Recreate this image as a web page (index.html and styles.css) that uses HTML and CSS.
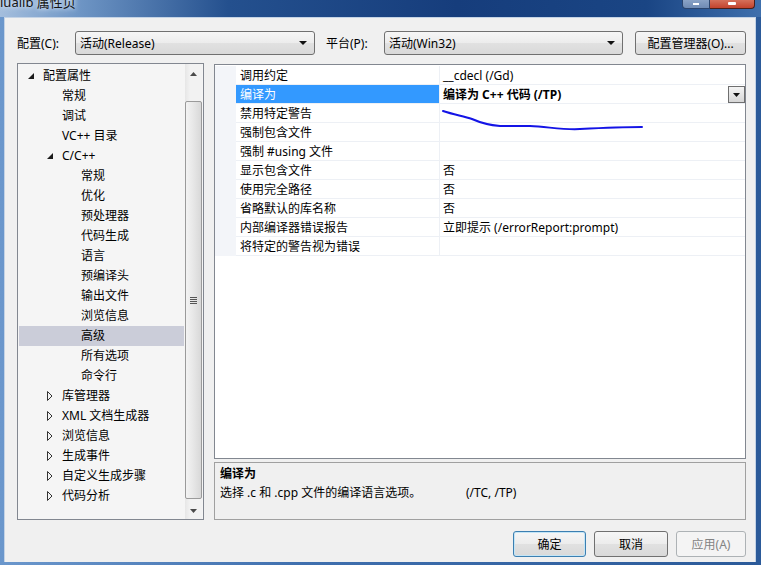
FILE: index.html
```html
<!DOCTYPE html>
<html lang="zh-CN">
  <head>
    <meta charset="utf-8">
    <link rel="stylesheet" href="styles.css">
    <title>lualib 属性页</title>
  </head>

  <body>
    <div class="window">
      <div class="titlebar">
        <span class="title">lualib 属性页</span>
        <div class="caption">
          <span class="capMin"><i></i></span>
          <span class="capClose"><i></i></span>
        </div>
      </div>

      <div class="client">
        <!-- config / platform row -->
        <div class="topRow">
          <span class="lbl">配置(C):</span>
          <div class="combo comboConf">
            <span>活动(Release)</span>
            <span class="comboArrow"></span>
          </div>
          <span class="lbl lblPlat">平台(P):</span>
          <div class="combo comboPlat">
            <span>活动(Win32)</span>
            <span class="comboArrow"></span>
          </div>
          <div class="btn btnManager">配置管理器(O)...</div>
        </div>

        <div class="mainRow">
          <!-- property tree -->
          <div class="tree">
            <div class="treeList">
              <div class="tRow lvl1"><span class="tw"><svg width="7" height="7" viewBox="0 0 7 7"><polygon points="6,0 6,6 0,6" fill="#1b1b1b"/></svg></span>配置属性</div>
              <div class="tRow lvl2"><span class="tw"></span>常规</div>
              <div class="tRow lvl2"><span class="tw"></span>调试</div>
              <div class="tRow lvl2"><span class="tw"></span>VC++ 目录</div>
              <div class="tRow lvl2"><span class="tw"><svg width="7" height="7" viewBox="0 0 7 7"><polygon points="6,0 6,6 0,6" fill="#1b1b1b"/></svg></span>C/C++</div>
              <div class="tRow lvl3"><span class="tw"></span>常规</div>
              <div class="tRow lvl3"><span class="tw"></span>优化</div>
              <div class="tRow lvl3"><span class="tw"></span>预处理器</div>
              <div class="tRow lvl3"><span class="tw"></span>代码生成</div>
              <div class="tRow lvl3"><span class="tw"></span>语言</div>
              <div class="tRow lvl3"><span class="tw"></span>预编译头</div>
              <div class="tRow lvl3"><span class="tw"></span>输出文件</div>
              <div class="tRow lvl3"><span class="tw"></span>浏览信息</div>
              <div class="tRow lvl3 tSel"><span class="tw"></span>高级</div>
              <div class="tRow lvl3"><span class="tw"></span>所有选项</div>
              <div class="tRow lvl3"><span class="tw"></span>命令行</div>
              <div class="tRow lvl2"><span class="tw"><svg width="6" height="10" viewBox="0 0 6 10"><polygon points="0.5,0.5 5,5 0.5,9.5" fill="none" stroke="#333" stroke-width="1"/></svg></span>库管理器</div>
              <div class="tRow lvl2"><span class="tw"><svg width="6" height="10" viewBox="0 0 6 10"><polygon points="0.5,0.5 5,5 0.5,9.5" fill="none" stroke="#333" stroke-width="1"/></svg></span>XML 文档生成器</div>
              <div class="tRow lvl2"><span class="tw"><svg width="6" height="10" viewBox="0 0 6 10"><polygon points="0.5,0.5 5,5 0.5,9.5" fill="none" stroke="#333" stroke-width="1"/></svg></span>浏览信息</div>
              <div class="tRow lvl2"><span class="tw"><svg width="6" height="10" viewBox="0 0 6 10"><polygon points="0.5,0.5 5,5 0.5,9.5" fill="none" stroke="#333" stroke-width="1"/></svg></span>生成事件</div>
              <div class="tRow lvl2"><span class="tw"><svg width="6" height="10" viewBox="0 0 6 10"><polygon points="0.5,0.5 5,5 0.5,9.5" fill="none" stroke="#333" stroke-width="1"/></svg></span>自定义生成步骤</div>
              <div class="tRow lvl2"><span class="tw"><svg width="6" height="10" viewBox="0 0 6 10"><polygon points="0.5,0.5 5,5 0.5,9.5" fill="none" stroke="#333" stroke-width="1"/></svg></span>代码分析</div>
            </div>

            <div class="vScroll">
              <div class="sbBtn"><svg width="7" height="4" viewBox="0 0 7 4"><polygon points="3.5,0 7,4 0,4" fill="#4a4a4a"/></svg></div>
              <div class="sbTrack">
                <div class="sbThumb">
                  <div class="grip"><i></i><i></i><i></i><i></i></div>
                </div>
              </div>
              <div class="sbBtn sbDown"><svg width="7" height="4" viewBox="0 0 7 4"><polygon points="0,0 7,0 3.5,4" fill="#4a4a4a"/></svg></div>
            </div>
          </div>

          <div class="rightCol">
            <!-- property grid -->
            <div class="grid">
              <div class="gRow"><span class="gm"></span><span class="gn">调用约定</span><span class="gv">__cdecl (/Gd)</span></div>
              <div class="gRow"><span class="gm"></span><span class="gn gSel">编译为</span><span class="gv gBold">编译为 C++ 代码 (/TP)<span class="ddBtn"><svg width="7" height="4" viewBox="0 0 7 4"><polygon points="0,0 7,0 3.5,4" fill="#111"/></svg></span></span></div>
              <div class="gRow"><span class="gm"></span><span class="gn">禁用特定警告</span><span class="gv"></span></div>
              <div class="gRow"><span class="gm"></span><span class="gn">强制包含文件</span><span class="gv"></span></div>
              <div class="gRow"><span class="gm"></span><span class="gn">强制 #using 文件</span><span class="gv"></span></div>
              <div class="gRow"><span class="gm"></span><span class="gn">显示包含文件</span><span class="gv">否</span></div>
              <div class="gRow"><span class="gm"></span><span class="gn">使用完全路径</span><span class="gv">否</span></div>
              <div class="gRow"><span class="gm"></span><span class="gn">省略默认的库名称</span><span class="gv">否</span></div>
              <div class="gRow"><span class="gm"></span><span class="gn">内部编译器错误报告</span><span class="gv">立即提示 (/errorReport:prompt)</span></div>
              <div class="gRow"><span class="gm"></span><span class="gn">将特定的警告视为错误</span><span class="gv"></span></div>

              <!-- hand-drawn pen mark over the grid -->
              <svg class="scribble" width="532" height="395" viewBox="214 63 532 395">
                <path d="M443,110 C455,114 464,115 472,118 C481,122 488,124 500,125 L530,125 C549,126 564,129 580,128 C600,127 620,126 642,126" fill="none" stroke="#1414e6" stroke-width="2" stroke-linecap="round"/>
              </svg>
            </div>

            <div class="desc">
              <div class="descTitle">编译为</div>
              <div><span class="descText">选择 .c 和 .cpp 文件的编译语言选项。</span>(/TC, /TP)</div>
            </div>
          </div>
        </div>

        <div class="btnRow">
          <div class="btn btnOk">确定</div>
          <div class="btn btnCancel">取消</div>
          <div class="btn btnApply">应用(A)</div>
        </div>
      </div>
    </div>
  </body>
</html>
```

FILE: styles.css
```css
* {box-sizing: border-box;}

body {
  margin: 0;
  font-family: "Noto Sans", "Noto Sans CJK SC", sans-serif;
  font-size: 12px;
  color: #000;
}

.window {
  width: 761px;
  height: 565px;
  overflow: hidden;
  display: flex;
  flex-direction: column;
  background: linear-gradient(90deg, #6b97cc 0, #3f6fae 40%, #2b5a99 100%);
}

/* title bar ---------------------------------------------------------- */
.titlebar {
  height: 17px;
  flex: none;
  display: flex;
  overflow: hidden;
  background: linear-gradient(90deg, #a4bedd 0, #7097c6 10%, #24508e 30%, #163d7c 60%, #1a4584 85%, #3f70ad 100%);
}

.title {
  margin-top: -6px;
  line-height: 17px;
  font-size: 13px;
  color: #141414;
  text-shadow: 0 0 4px #d8e6f5, 0 0 6px #d8e6f5;
}

.caption {
  margin-left: auto;
  margin-right: 6px;
  display: flex;
  height: 9px;
}

.capMin {
  width: 28px;
  border: 1px solid #2c466e;
  border-top: none;
  border-radius: 0 0 0 4px;
  background: linear-gradient(#8aa3c6, #6f8bb4);
  display: flex;
  justify-content: center;
}
.capMin i {
  width: 6px;
  height: 2px;
  margin-top: 3px;
  background: #fff;
}

.capClose {
  width: 45px;
  border: 1px solid #4a1f1a;
  border-left: none;
  border-top: none;
  border-radius: 0 0 4px 0;
  background: linear-gradient(#d5705a, #c2432d);
  display: flex;
  justify-content: center;
}
.capClose i {
  width: 8px;
  height: 3px;
  margin-top: 2px;
  background: #fff;
  border-radius: 1px;
}

/* client area -------------------------------------------------------- */
.client {
  flex: 1;
  margin: 0 5px 3px 4px;
  background: #f0f0f0;
  border: 1px solid #c4d3e5;
  border-bottom: none;
  padding: 13px 9px 0 12px;
}

.topRow {
  display: flex;
  align-items: center;
  height: 24px;
}

.lbl {
  width: 58px;
}
.lblPlat {
  margin-left: 11px;
}

.combo, .btn {
  height: 24px;
  border: 1px solid #707070;
  border-radius: 3px;
  background: linear-gradient(#f6f6f6 0, #ececec 50%, #e1e1e1 50%, #d9d9d9 100%);
  display: flex;
  align-items: center;
}

.combo {
  padding-left: 4px;
}
.comboConf {
  width: 240px;
}
.comboPlat {
  width: 239px;
}
.comboArrow {
  margin-left: auto;
  margin-right: 7px;
  width: 0;
  height: 0;
  border-left: 4px solid transparent;
  border-right: 4px solid transparent;
  border-top: 4px solid #111;
}

.btn {
  justify-content: center;
}
.btnManager {
  margin-left: 12px;
  width: 111px;
}

/* main area ---------------------------------------------------------- */
.mainRow {
  display: flex;
  margin-top: 8px;
  height: 457px;
}

.tree {
  width: 187px;
  border: 1px solid #828790;
  background: #f5f5f5;
  display: flex;
}

.treeList {
  flex: 1;
  padding: 2px 1px 0 1px;
}

.tRow {
  height: 20px;
  line-height: 20px;
  display: flex;
  align-items: center;
  white-space: nowrap;
}
.tRow .tw {
  width: 15px;
  flex: none;
  display: flex;
  align-items: center;
}
.lvl1 {padding-left: 9px;}
.lvl2 {padding-left: 28px;}
.lvl3 {padding-left: 47px;}
.tSel {background: #cbcdd9;}

.vScroll {
  width: 17px;
  margin-right: 1px;
  display: flex;
  flex-direction: column;
  background: linear-gradient(90deg, #e6e6e6 0, #f2f2f2 30%, #f2f2f2 100%);
}

.sbBtn {
  height: 19px;
  display: flex;
  align-items: center;
  justify-content: center;
}
.sbDown {
  height: 17px;
}

.sbTrack {
  flex: 1;
  padding: 18px 0 3px;
}

.sbThumb {
  height: 100%;
  border: 1px solid #9a9a9a;
  border-radius: 2px;
  background: linear-gradient(90deg, #f3f3f3 0, #e8e8e8 45%, #d8d8d8 100%);
  display: flex;
  align-items: center;
  justify-content: center;
}
.grip i {
  display: block;
  width: 7px;
  height: 1px;
  margin: 1px 0;
  background: #555;
}

.rightCol {
  flex: 1;
  margin-left: 10px;
  display: flex;
  flex-direction: column;
}

.grid {
  height: 395px;
  margin-top: 1px;
  padding-top: 1px;
  border: 1px solid #828790;
  background: #fff;
  position: relative;
}

.gRow {
  display: flex;
  height: 19px;
  line-height: 19px;
}
.gm {
  width: 21px;
  flex: none;
  background: #f3f5f9;
}
.gn {
  width: 204px;
  flex: none;
  padding-left: 4px;
  border-right: 1px solid #edf0f5;
  border-bottom: 1px solid #edf0f5;
  white-space: nowrap;
}
.gv {
  flex: 1;
  padding-left: 3px;
  border-bottom: 1px solid #edf0f5;
  display: flex;
  align-items: flex-start;
  white-space: nowrap;
}
.gSel {
  background: #3399ff;
  color: #fff;
}
.gBold {
  font-weight: bold;
}

.ddBtn {
  margin-left: auto;
  margin-top: 1px;
  width: 17px;
  height: 17px;
  border: 1px solid #6f6f6f;
  background: linear-gradient(#f4f4f4, #d6d6d6);
  display: flex;
  align-items: center;
  justify-content: center;
}

.scribble {
  position: absolute;
  left: -1px;
  top: -1px;
}

.desc {
  height: 58px;
  margin-top: 3px;
  border: 1px solid #a0a0a0;
  background: #f0f0f0;
  padding: 1px 5px;
  line-height: 19px;
}
.descTitle {
  font-weight: bold;
}
.descText {
  display: inline-block;
  width: 246px;
}

/* dialog buttons ----------------------------------------------------- */
.btnRow {
  display: flex;
  justify-content: flex-end;
  gap: 8px;
  margin-top: 11px;
}
.btnRow .btn {
  height: 26px;
}
.btnOk {
  width: 73px;
  border-color: #3c7fb1;
  box-shadow: inset 0 0 0 1px #c4e5f6;
}
.btnCancel {
  width: 74px;
}
.btnApply {
  width: 70px;
  border-color: #adb2b5;
  background: #f4f4f4;
  color: #838383;
}
```
